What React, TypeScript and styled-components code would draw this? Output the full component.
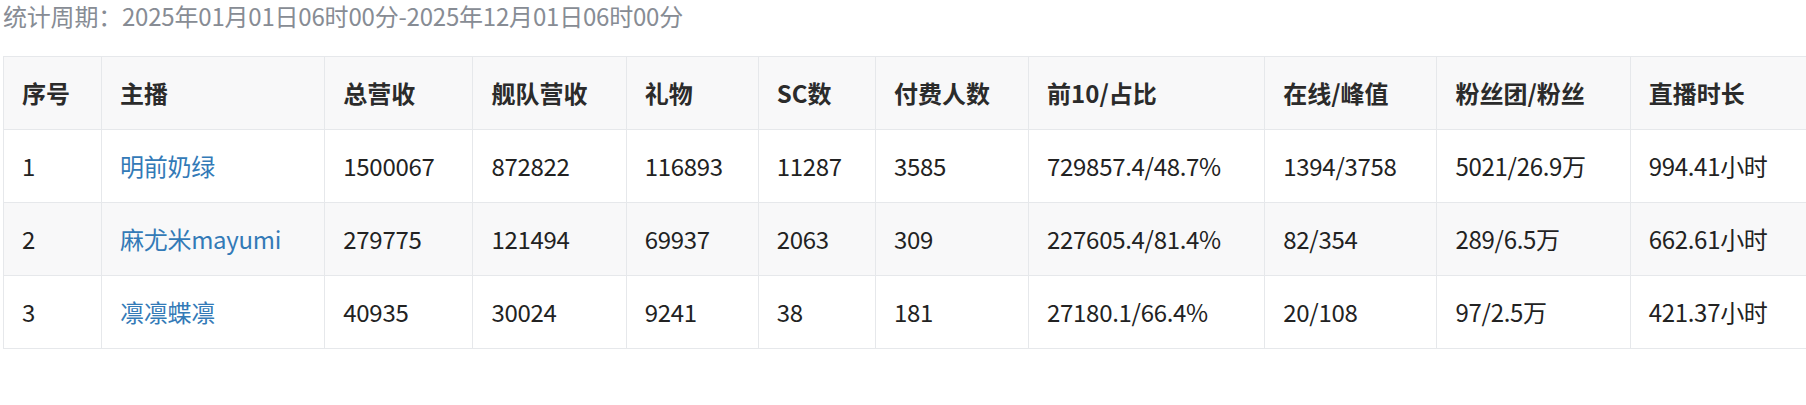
import React from "react";
import styled, { createGlobalStyle } from "styled-components";

type Anchor = {
  rank: number;
  name: string;
  total: number;
  guard: number;
  gift: number;
  sc: number;
  payers: number;
  top10: string;
  online: string;
  fans: string;
  duration: string;
};

const GlobalStyle = createGlobalStyle`
  html, body {
    margin: 0;
    padding: 0;
    background: #fff;
    overflow: hidden;
  }
  body {
    font-family: "Noto Sans CJK SC", "Noto Sans", sans-serif;
    color: #212529;
  }
`;

const Page = styled.div`
  padding-left: 3px;
  width: 1803px;
  overflow: hidden;
`;

const Period = styled.p`
  margin: 0 0 24px;
  font-size: 24px;
  line-height: 32px;
  letter-spacing: -0.2px;
  color: #878c94;
`;

const Table = styled.table`
  border-collapse: collapse;
  table-layout: fixed;
  width: 1846px;
  font-size: 24px;
  line-height: 36px;
`;

const HeadCell = styled.th`
  padding: 18px;
  border: 1px solid #e6e8eb;
  text-align: left;
  font-weight: 700;
  color: #2b2b2b;
  white-space: nowrap;
`;

const Cell = styled.td`
  padding: 18px;
  border: 1px solid #e6e8eb;
  text-align: left;
  color: #222;
  letter-spacing: -0.3px;
  white-space: nowrap;
`;

const HeadRow = styled.tr`
  background: #f8f8f9;
`;

const Row = styled.tr<{ $striped: boolean }>`
  background: ${({ $striped }) => ($striped ? "#f8f8f9" : "#fff")};
`;

const NameLink = styled.a`
  color: #337ab7;
  text-decoration: none;
`;

const columns = [
  { title: "序号", width: 98 },
  { title: "主播", width: 223 },
  { title: "总营收", width: 148 },
  { title: "舰队营收", width: 153 },
  { title: "礼物", width: 132 },
  { title: "SC数", width: 117 },
  { title: "付费人数", width: 153 },
  { title: "前10/占比", width: 236 },
  { title: "在线/峰值", width: 172 },
  { title: "粉丝团/粉丝", width: 193 },
  { title: "直播时长", width: 218 },
];

const anchors: Anchor[] = [
  {
    rank: 1,
    name: "明前奶绿",
    total: 1500067,
    guard: 872822,
    gift: 116893,
    sc: 11287,
    payers: 3585,
    top10: "729857.4/48.7%",
    online: "1394/3758",
    fans: "5021/26.9万",
    duration: "994.41小时",
  },
  {
    rank: 2,
    name: "麻尤米mayumi",
    total: 279775,
    guard: 121494,
    gift: 69937,
    sc: 2063,
    payers: 309,
    top10: "227605.4/81.4%",
    online: "82/354",
    fans: "289/6.5万",
    duration: "662.61小时",
  },
  {
    rank: 3,
    name: "凛凛蝶凛",
    total: 40935,
    guard: 30024,
    gift: 9241,
    sc: 38,
    payers: 181,
    top10: "27180.1/66.4%",
    online: "20/108",
    fans: "97/2.5万",
    duration: "421.37小时",
  },
];

function App() {
  return (
    <Page>
      <GlobalStyle />
      <Period>统计周期：2025年01月01日06时00分-2025年12月01日06时00分</Period>
      <Table>
        <colgroup>
          {columns.map((col) => (
            <col key={col.title} style={{ width: col.width }} />
          ))}
        </colgroup>
        <thead>
          <HeadRow>
            {columns.map((col) => (
              <HeadCell key={col.title}>{col.title}</HeadCell>
            ))}
          </HeadRow>
        </thead>
        <tbody>
          {anchors.map((a, index) => (
            <Row key={a.rank} $striped={index % 2 === 1}>
              <Cell>{a.rank}</Cell>
              <Cell>
                <NameLink href="#">{a.name}</NameLink>
              </Cell>
              <Cell>{a.total}</Cell>
              <Cell>{a.guard}</Cell>
              <Cell>{a.gift}</Cell>
              <Cell>{a.sc}</Cell>
              <Cell>{a.payers}</Cell>
              <Cell>{a.top10}</Cell>
              <Cell>{a.online}</Cell>
              <Cell>{a.fans}</Cell>
              <Cell>{a.duration}</Cell>
            </Row>
          ))}
        </tbody>
      </Table>
    </Page>
  );
}

export default App;
